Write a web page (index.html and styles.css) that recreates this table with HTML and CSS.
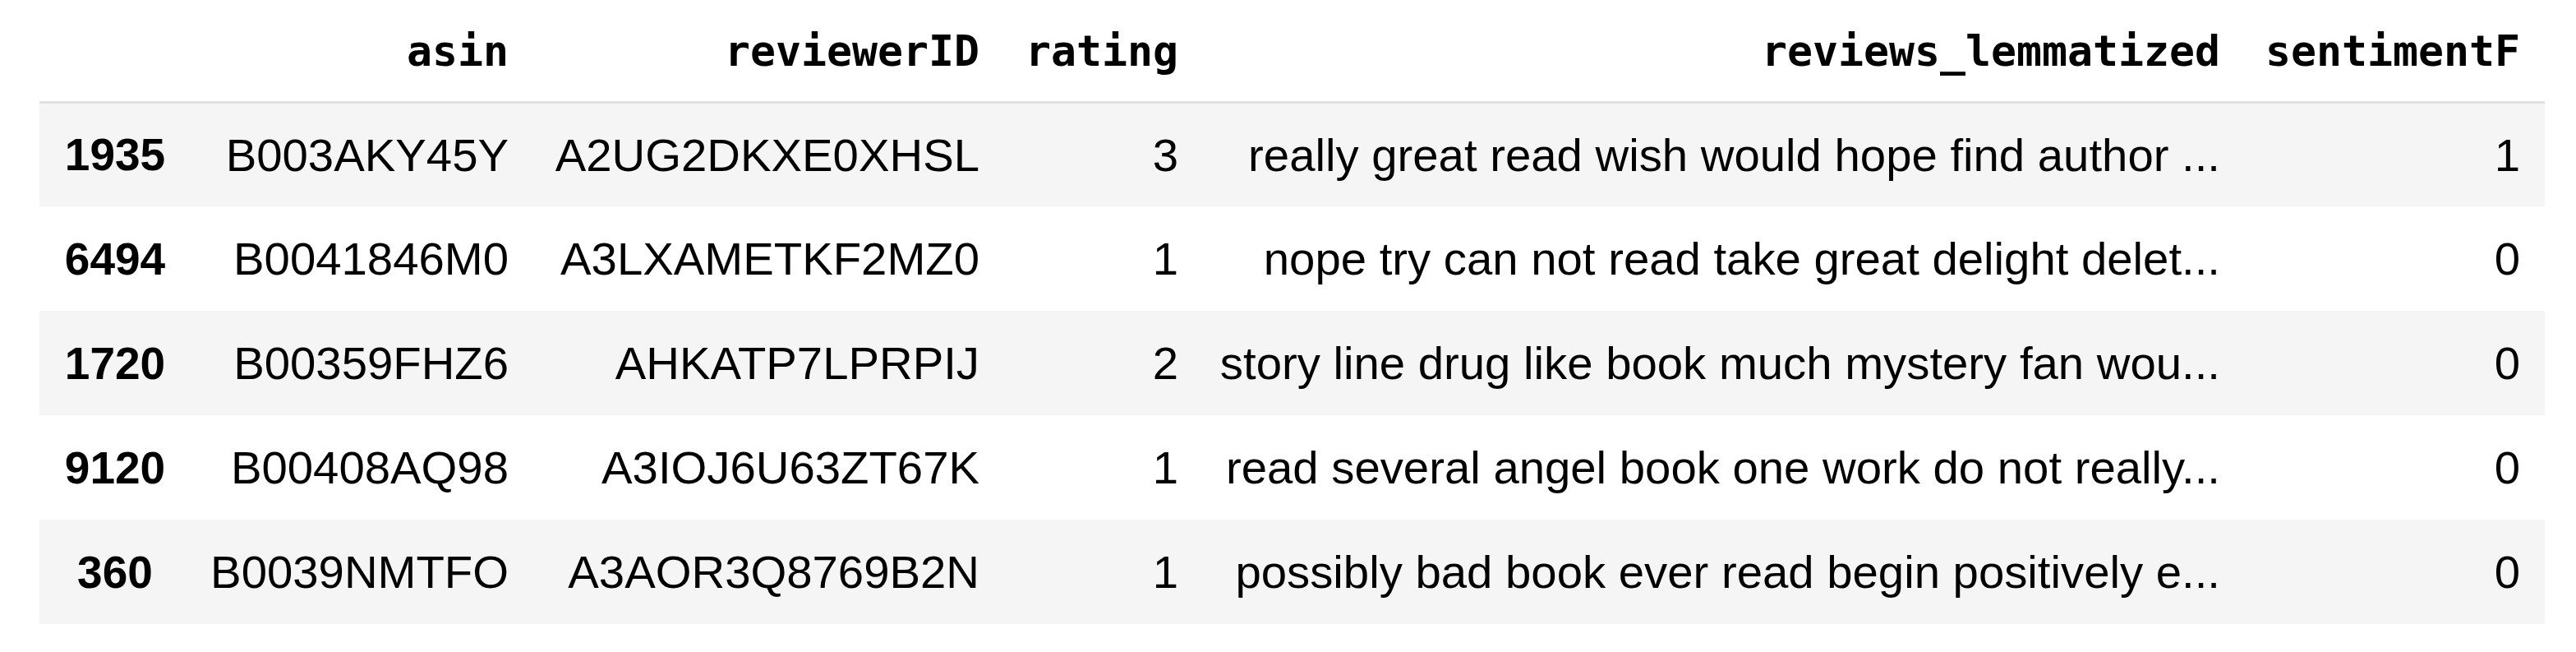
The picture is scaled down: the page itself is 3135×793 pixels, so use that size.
FILE: index.html
```html
<!DOCTYPE html>
<html>
<head>
<meta charset="utf-8">
<link rel="stylesheet" href="styles.css">
</head>
<body>
<div class="wrap">
<table class="df">
  <colgroup>
    <col class="w-idx"><col class="w-asin"><col class="w-rev"><col class="w-rating"><col class="w-lem"><col class="w-sent">
  </colgroup>
  <thead>
    <tr><th class="hidx"></th><th>asin</th><th>reviewerID</th><th>rating</th><th>reviews_lemmatized</th><th>sentimentF</th></tr>
  </thead>
  <tbody>
    <tr class="odd"><th class="idx">1935</th><td>B003AKY45Y</td><td>A2UG2DKXE0XHSL</td><td>3</td><td>really great read wish would hope find author ...</td><td>1</td></tr>
    <tr><th class="idx">6494</th><td>B0041846M0</td><td>A3LXAMETKF2MZ0</td><td>1</td><td>nope try can not read take great delight delet...</td><td>0</td></tr>
    <tr class="odd"><th class="idx">1720</th><td>B00359FHZ6</td><td>AHKATP7LPRPIJ</td><td>2</td><td>story line drug like book much mystery fan wou...</td><td>0</td></tr>
    <tr><th class="idx">9120</th><td>B00408AQ98</td><td>A3IOJ6U63ZT67K</td><td>1</td><td>read several angel book one work do not really...</td><td>0</td></tr>
    <tr class="odd"><th class="idx">360</th><td>B0039NMTFO</td><td>A3AOR3Q8769B2N</td><td>1</td><td>possibly bad book ever read begin positively e...</td><td>0</td></tr>
  </tbody>
</table>
</div>
</body>
</html>
```
FILE: styles.css
```css
html, body { margin: 0; padding: 0; background: #fff; }
.wrap { padding-left: 48px; }
.df {
  border-collapse: collapse;
  table-layout: fixed;
  width: 3049px;
  color: #000;
}
.w-idx { width: 184px; }
.w-asin { width: 417px; }
.w-rev { width: 573px; }
.w-rating { width: 242px; }
.w-lem { width: 1268px; }
.w-sent { width: 365px; }
.df th, .df td {
  padding: 0 30px 0 20px;
  white-space: nowrap;
  overflow: hidden;
  vertical-align: middle;
}
.df thead th {
  height: 124px;
  border-bottom: 3px solid #e0e0e0;
  font-family: "DejaVu Sans Mono", monospace;
  font-weight: bold;
  font-size: 51.5px;
  text-align: right;
  padding-top: 2px;
  box-sizing: border-box;
}
.df tbody tr { height: 127px; }
.df tbody tr.odd { background: #f5f5f5; }
.df td {
  font-family: "Liberation Sans", Arial, sans-serif;
  font-size: 56.3px;
  text-align: right;
}
.df th.idx {
  padding: 0;
  font-family: "Liberation Sans", Arial, sans-serif;
  font-weight: bold;
  font-size: 55px;
  text-align: center;
}
```
